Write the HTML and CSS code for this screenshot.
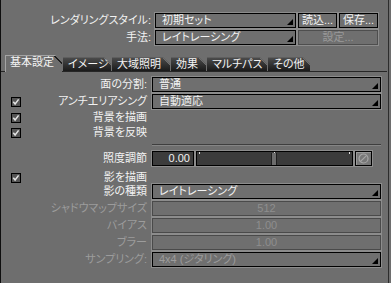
FILE: index.html
```html
<!DOCTYPE html>
<html lang="ja">
<head>
    <meta charset="UTF-8">
    <title>レンダリング設定</title>
    <link rel="stylesheet" href="styles.css">
</head>
<body>
    <div class="window">
        <!-- Render style / method -->
        <div class="header">
            <div class="hrow">
                <span class="hlabel">レンダリングスタイル:</span>
                <div class="select"><span>初期セット</span><i class="arrow"></i></div>
                <div class="btn">読込...</div>
                <div class="btn">保存...</div>
            </div>
            <div class="hrow">
                <span class="hlabel">手法:</span>
                <div class="select"><span>レイトレーシング</span><i class="arrow"></i></div>
                <div class="btn disabled wide">設定...</div>
            </div>
        </div>

        <div class="tabs">
            <div class="tab active">基本設定</div>
            <div class="tab">イメージ</div>
            <div class="tab">大域照明</div>
            <div class="tab">効果</div>
            <div class="tab">マルチパス</div>
            <div class="tab">その他</div>
        </div>

        <div class="panel">
            <div class="row">
                <div class="label">面の分割:</div>
                <div class="select"><span>普通</span><i class="arrow"></i></div>
            </div>
            <div class="row">
                <div class="label">
                    <svg class="check" width="10" height="10" viewBox="0 0 10 10"><rect x="0.5" y="0.5" width="9" height="9" fill="#555" stroke="#000"/><path d="M2.3 4.8 L4.1 7 L7.6 2.4" fill="none" stroke="#e4e4e4" stroke-width="1.5"/></svg>
                    <span>アンチエリアシング</span>
                </div>
                <div class="select"><span>自動適応</span><i class="arrow"></i></div>
            </div>
            <div class="row short">
                <div class="label">
                    <svg class="check" width="10" height="10" viewBox="0 0 10 10"><rect x="0.5" y="0.5" width="9" height="9" fill="#555" stroke="#000"/><path d="M2.3 4.8 L4.1 7 L7.6 2.4" fill="none" stroke="#e4e4e4" stroke-width="1.5"/></svg>
                    <span>背景を描画</span>
                </div>
            </div>
            <div class="row short">
                <div class="label">
                    <svg class="check" width="10" height="10" viewBox="0 0 10 10"><rect x="0.5" y="0.5" width="9" height="9" fill="#555" stroke="#000"/><path d="M2.3 4.8 L4.1 7 L7.6 2.4" fill="none" stroke="#e4e4e4" stroke-width="1.5"/></svg>
                    <span>背景を反映</span>
                </div>
            </div>

            <div class="sep"></div>

            <div class="row">
                <div class="label">照度調節</div>
                <div class="slider-group">
                    <div class="numfield">0.00</div>
                    <div class="slider"><i class="thumb" style="left: 48%"></i></div>
                    <div class="reset">
                        <svg width="11" height="11" viewBox="0 0 11 11"><circle cx="5.5" cy="5.5" r="4.5" fill="none" stroke="#a6a6a6" stroke-width="1.2"/><path d="M2.3 8.7 L8.7 2.3" stroke="#a6a6a6" stroke-width="1.2"/></svg>
                    </div>
                </div>
            </div>
            <div class="row short shadow">
                <div class="label">
                    <svg class="check" width="10" height="10" viewBox="0 0 10 10"><rect x="0.5" y="0.5" width="9" height="9" fill="#555" stroke="#000"/><path d="M2.3 4.8 L4.1 7 L7.6 2.4" fill="none" stroke="#e4e4e4" stroke-width="1.5"/></svg>
                    <span>影を描画</span>
                </div>
            </div>
            <div class="row tight">
                <div class="label">影の種類</div>
                <div class="select"><span>レイトレーシング</span><i class="arrow"></i></div>
            </div>
            <div class="row off">
                <div class="label">シャドウマップサイズ</div>
                <div class="field">512</div>
            </div>
            <div class="row off">
                <div class="label">バイアス</div>
                <div class="field">1.00</div>
            </div>
            <div class="row off">
                <div class="label">ブラー</div>
                <div class="field">1.00</div>
            </div>
            <div class="row off">
                <div class="label">サンプリング:</div>
                <div class="select"><span>4x4 (ジタリング)</span><i class="arrow"></i></div>
            </div>
        </div>
    </div>
</body>
</html>
```

FILE: styles.css
```css
body {
    margin: 0;
    background-color: #6e6e6e;
    font-family: "Liberation Sans", "Noto Sans CJK JP", sans-serif;
    font-size: 11px;
    font-feature-settings: "palt";
    color: #f2f2f2;
}
.window {
    width: 389px;
    height: 283px;
    box-sizing: border-box;
    border-left: 1px solid #0e0e0e;
    border-right: 1px solid #2c2c2c;
    padding-top: 13px;
}

/* header rows */
.header {
    display: flex;
    flex-direction: column;
    gap: 2px;
}
.hrow {
    display: grid;
    grid-template-columns: 152px 141px 39px 39px;
    column-gap: 2px;
    height: 15px;
}
.hlabel {
    text-align: right;
    padding-right: 2px;
    line-height: 15px;
}
.wide {
    grid-column: span 2;
}

/* controls */
.select,
.btn,
.field,
.numfield {
    box-sizing: border-box;
    height: 15px;
    line-height: 13px;
    border: 1px solid #000;
    box-shadow: 0 0 0 1px #8c8c8c;
    background-color: #6f6f6f;
}
.select {
    display: flex;
    padding-left: 6px;
    white-space: nowrap;
}
.arrow {
    margin-left: auto;
    align-self: flex-end;
    width: 6px;
    height: 6px;
    margin-right: 2px;
    margin-bottom: 2px;
    background: #000;
    clip-path: polygon(100% 0, 100% 100%, 0 100%);
}
.btn {
    text-align: center;
}
.btn.disabled {
    border-color: #4e4e4e;
    color: #9a9a9a;
}

/* tabs */
.tabs {
    display: flex;
    align-items: flex-end;
    gap: 1px;
    margin: 10px 1px 0 0;
    padding-left: 4px;
    height: 16px;
    border-bottom: 1px solid #262626;
}
.tab {
    flex: none;
    height: 14px;
    line-height: 13px;
    padding-left: 5px;
    color: #f4f4f4;
    white-space: nowrap;
    border-top: 1px solid #5e5e5e;
    box-sizing: border-box;
    background: linear-gradient(225deg, #6e6e6e 0 5.6px, transparent 5.6px), linear-gradient(#4a4a4a, #1a1a1a);
    clip-path: polygon(0 0, calc(100% - 7px) 0, 100% 7px, 100% 100%, 0 100%);
}
.tab:nth-child(1) { width: 57px; }
.tab:nth-child(2) { width: 48px; }
.tab:nth-child(3) { width: 58px; }
.tab:nth-child(4) { width: 35px; }
.tab:nth-child(5) { width: 60px; }
.tab:nth-child(6) { width: 42px; }
.tab.active {
    height: 17px;
    margin-bottom: -1px;
    padding-left: 4px;
    border-top: 1px solid #a4a4a4;
    border-left: 1px solid #a4a4a4;
    background: linear-gradient(225deg, #6e6e6e 0 4.9px, #1e1e1e 4.9px 6.2px, transparent 6.2px), #6e6e6e;
}

/* panel rows */
.panel {
    padding-top: 5px;
}
.row {
    display: grid;
    grid-template-columns: 146px 229px;
    column-gap: 5px;
    height: 15px;
    margin-bottom: 2px;
}
.row.short {
    height: 14px;
    margin: -1px 0 1px;
}
.row.short + .row.short {
    margin-top: 0;
}
.row.shadow {
    margin: 4px 0 0;
}
.row.tight {
    margin-top: 0;
}
.label {
    display: flex;
    align-items: center;
    justify-content: flex-end;
    white-space: nowrap;
    line-height: 15px;
}
.check {
    margin: 0 auto 0 10px;
    flex: none;
}
.sep {
    width: 229px;
    margin: 5px 0 5px 151px;
    border-top: 1px solid #3e3e3e;
    border-bottom: 1px solid #858585;
}

/* slider row */
.slider-group {
    display: flex;
    gap: 2px;
}
.numfield {
    width: 42px;
    background-color: #3c3c3c;
    text-align: right;
    padding-right: 3px;
}
.slider {
    position: relative;
    width: 157px;
    height: 15px;
    box-sizing: border-box;
    border: 1px solid #000;
    box-shadow: 0 0 0 1px #8c8c8c;
    background: linear-gradient(#dedede, #dedede) 2px 0 / 1px 2px no-repeat,
        linear-gradient(#dedede, #dedede) 77px 0 / 1px 2px no-repeat,
        linear-gradient(#dedede, #dedede) 152px 0 / 1px 2px no-repeat,
        #3b3b3b;
}
.thumb {
    position: absolute;
    top: 1px;
    bottom: 0;
    width: 4px;
    background: #6c6c6c;
    border-left: 1px solid #1e1e1e;
    border-right: 1px solid #1e1e1e;
}
.reset {
    width: 17px;
    height: 15px;
    box-sizing: border-box;
    border: 1px solid #000;
    background: #777;
    box-shadow: inset 1px 1px 0 #999, 0 0 0 1px #8c8c8c;
    display: flex;
    align-items: center;
    justify-content: center;
}

/* disabled rows */
.off .label,
.off .select {
    color: #9c9c9c;
}
.field {
    border-color: #4a4a4a;
    text-align: center;
    color: #8e8e8e;
}
```
